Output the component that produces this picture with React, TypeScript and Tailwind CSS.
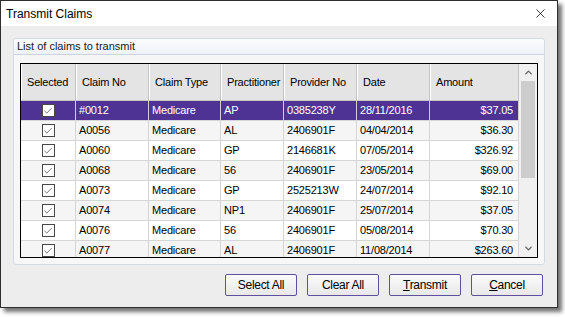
import { Check, X, ChevronUp, ChevronDown } from 'lucide-react';

const claims = [
  { no: "#0012", type: "Medicare", prac: "AP", provider: "0385238Y", date: "28/11/2016", amount: "$37.05" },
  { no: "A0056", type: "Medicare", prac: "AL", provider: "2406901F", date: "04/04/2014", amount: "$36.30" },
  { no: "A0060", type: "Medicare", prac: "GP", provider: "2146681K", date: "07/05/2014", amount: "$326.92" },
  { no: "A0068", type: "Medicare", prac: "56", provider: "2406901F", date: "23/05/2014", amount: "$69.00" },
  { no: "A0073", type: "Medicare", prac: "GP", provider: "2525213W", date: "24/07/2014", amount: "$92.10" },
  { no: "A0074", type: "Medicare", prac: "NP1", provider: "2406901F", date: "25/07/2014", amount: "$37.05" },
  { no: "A0076", type: "Medicare", prac: "56", provider: "2406901F", date: "05/08/2014", amount: "$70.30" },
  { no: "A0077", type: "Medicare", prac: "AL", provider: "2406901F", date: "11/08/2014", amount: "$263.60" },
];

const headers = [
  { label: "Selected", w: "w-[55px]" },
  { label: "Claim No", w: "w-[73px]" },
  { label: "Claim Type", w: "w-[72px]" },
  { label: "Practitioner", w: "w-[63px]" },
  { label: "Provider No", w: "w-[73px]" },
  { label: "Date", w: "w-[73px]" },
  { label: "Amount", w: "w-[89px]" },
];

const font = "font-['Liberation_Sans',Arial,sans-serif]";

const Btn = ({ children }: { children: React.ReactNode }) => (
  <button className="w-[72px] h-[22px] rounded-[2px] border border-[#5e509f] bg-gradient-to-b from-[#fbfbfb] to-[#e8e8e8] text-[12px] tracking-[-0.3px] text-black flex items-center justify-center">
    {children}
  </button>
);

const App = () => {
  return (
    <div className={`w-[565px] h-[317px] bg-white ${font}`}>
      <div className="w-[558px] h-[308px] border border-[#2e2e2e] bg-[#ededed] shadow-[4px_4px_4px_rgba(0,0,0,0.55)] flex flex-col">
        <div className="h-[25px] bg-white flex items-center justify-between pl-[5px] pr-[9px] shrink-0">
          <span className="text-[12px] text-black">Transmit Claims</span>
          <X className="h-[15px] w-[15px] text-black" strokeWidth={1.2} />
        </div>

        <div className="flex flex-col px-[12px] pt-[12px]">
          <div className="h-[227px] border border-[#d5dbe3] rounded-[3px] bg-[#f7f7f7] flex flex-col">
            <div className="h-[16px] bg-gradient-to-b from-[#fbfcfe] to-[#eef2f8] border-b border-[#c9d3e3] flex items-center px-[3px] text-[11px] text-[#1a1a1a] shrink-0 rounded-t-[3px]">
              List of claims to transmit
            </div>

            <div className="ml-[6px] mt-[8px] w-[518px] h-[195px] border border-black bg-white flex overflow-hidden tracking-[-0.2px]">
              <div className="flex flex-col w-[498px]">
                <div className="h-[37px] flex bg-[#e4e4e4] border-b border-[#c6c6c6] shrink-0">
                  {headers.map((h) => (
                    <div key={h.label} className={`${h.w} shrink-0 flex items-center pl-[6px] text-[11px] text-black whitespace-nowrap overflow-hidden border-r border-[#c4c4c4] shadow-[inset_1px_0_0_#ffffff]`}>
                      {h.label}
                    </div>
                  ))}
                </div>
                {claims.map((c, i) => {
                  const sel = i === 0;
                  const bg = sel ? "bg-[#4e3394] text-white" : i % 2 === 1 ? "bg-[#f5f5f5] text-black" : "bg-white text-black";
                  const cell = `shrink-0 flex items-center border-r ${sel ? "border-[#d0d0d0]" : "border-[#d6d6d6]"}`;
                  return (
                    <div key={c.no} className={`h-[20px] flex shrink-0 border-b border-[#d6d6d6] text-[11px] ${bg}`}>
                      <div className={`${cell} w-[55px] justify-center`}>
                        <div className="w-[13px] h-[13px] border border-[#474747] bg-white flex items-center justify-center">
                          <Check className="w-[10px] h-[10px] text-[#474747]" strokeWidth={1.8} />
                        </div>
                      </div>
                      <div className={`${cell} w-[73px] pl-[3px]`}>{c.no}</div>
                      <div className={`${cell} w-[72px] pl-[3px]`}>{c.type}</div>
                      <div className={`${cell} w-[63px] pl-[3px]`}>{c.prac}</div>
                      <div className={`${cell} w-[73px] pl-[3px]`}>{c.provider}</div>
                      <div className={`${cell} w-[73px] pl-[3px]`}>{c.date}</div>
                      <div className={`${cell} w-[89px] justify-end pr-[5px]`}>{c.amount}</div>
                    </div>
                  );
                })}
              </div>
              <div className="w-[18px] bg-[#f0f0f0] flex flex-col items-center">
                <div className="h-[17px] flex items-center justify-center">
                  <ChevronUp className="w-[11px] h-[11px] text-[#606060]" strokeWidth={3} />
                </div>
                <div className="w-[14px] h-[97px] bg-[#cdcdcd]" />
                <div className="flex-1" />
                <div className="h-[17px] flex items-center justify-center">
                  <ChevronDown className="w-[11px] h-[11px] text-[#606060]" strokeWidth={3} />
                </div>
              </div>
            </div>
          </div>

          <div className="flex justify-end gap-[10px] mt-[9px] pr-[2px]">
            <Btn>Select All</Btn>
            <Btn>Clear All</Btn>
            <Btn><span><span className="underline">T</span>ransmit</span></Btn>
            <Btn><span><span className="underline">C</span>ancel</span></Btn>
          </div>
        </div>
      </div>
    </div>
  );
};

export default App;
